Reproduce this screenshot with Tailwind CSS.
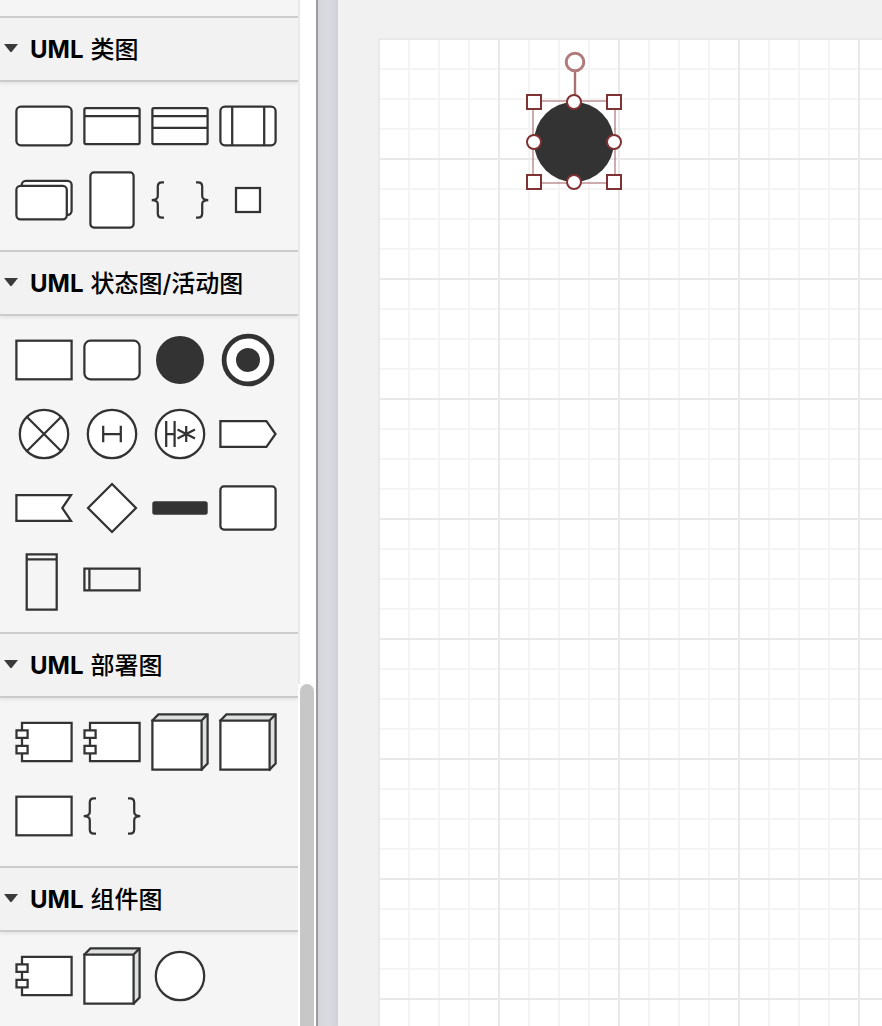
<!DOCTYPE html>
<html lang="zh">
<head>
<meta charset="utf-8">
<title>UML</title>
<script src="https://cdn.jsdelivr.net/npm/@tailwindcss/browser@4"></script>
</head>
<body class="h-[1026px] w-[882px] overflow-hidden font-['Inter','Noto_Sans_CJK_SC',sans-serif] text-black">
<svg class="hidden">
  <defs>
    <g id="tri"><path d="M4 0H18L12 7.6Q11 8.8 10 7.6Z" fill="#3a3a3a" stroke="none"/></g>
    <g id="rect"><rect x="-27.6" y="-19.3" width="55.2" height="38.6"/></g>
    <g id="round"><rect x="-27.6" y="-19.3" width="55.2" height="38.6" rx="4.5"/></g>
    <g id="braces" fill="none"><path d="M-16 -17.6H-18Q-22.2 -17.6 -22.2 -13.5V-4Q-22.2 0 -28.3 0Q-22.2 0 -22.2 4V13.5Q-22.2 17.6 -18 17.6H-16M16 -17.6H18Q22.2 -17.6 22.2 -13.5V-4Q22.2 0 28.3 0Q22.2 0 22.2 4V13.5Q22.2 17.6 18 17.6H16"/></g>
    <g id="comp"><path d="M-22 -19.2H27.6V19.2H-22Z"/><path d="M-27.5 -11.6H-16.4V-4.2H-27.5ZM-27.5 3.9H-16.4V11.3H-27.5Z"/></g>
    <g id="cube"><path d="M-27.6 -21.5L-21.6 -27.6H27.6V21.5L21.6 27.6Z" fill="#dfe0e0"/><path d="M-27.6 -21.5H21.6V27.6H-27.6ZM21.6 -21.5L27.6 -27.6"/></g>
    <g id="ring"><circle r="24.2"/></g>
  </defs>
</svg>
<div class="flex h-full">
  <aside class="h-full w-[298px] shrink-0 overflow-hidden bg-[#f5f5f5] pt-4">
    <section>
      <h2 class="flex h-[66px] items-center border-y-2 border-[#cbcbcb] bg-[#f2f2f2] text-2xl font-bold shadow-[0_2px_3px_#e4e4e4]"><svg class="mt-[-2px] h-[9px] w-[30px]" viewBox="0 0 30 9"><use href="#tri"/></svg><span class="flex pt-[2px]">UML<span class="ml-[7px] font-medium">类图</span></span></h2>
      <div class="grid auto-rows-[74px] grid-cols-[repeat(4,68px)] fill-white stroke-[#333] stroke-[2.25px] pt-[7px] pb-[13px] pl-[10px]">
        <svg viewBox="-34 -37 68 74"><use href="#round"/></svg>
        <svg viewBox="-34 -37 68 74"><rect x="-27.6" y="-18" width="55.2" height="36" rx="1.5"/><path d="M-27 -10H27"/></svg>
        <svg viewBox="-34 -37 68 74"><rect x="-27.6" y="-18" width="55.2" height="36" rx="1.5"/><path d="M-27 -10H27M-27 1.8H27"/></svg>
        <svg viewBox="-34 -37 68 74"><use href="#round"/><path d="M-15.8 -19V19M16.2 -19V19"/></svg>
        <svg viewBox="-34 -37 68 74"><rect x="-22.2" y="-19.2" width="49.8" height="34" rx="4"/><rect x="-27.6" y="-14.2" width="50.4" height="33.5" rx="4"/></svg>
        <svg viewBox="-34 -37 68 74"><rect x="-21.6" y="-27.6" width="43.2" height="55.2" rx="3.5"/></svg>
        <svg viewBox="-34 -37 68 74"><use href="#braces"/></svg>
        <svg viewBox="-34 -37 68 74"><rect x="-12" y="-12" width="24" height="24"/></svg>
      </div>
    </section>
    <section>
      <h2 class="flex h-[66px] items-center border-y-2 border-[#cbcbcb] bg-[#f2f2f2] text-2xl font-bold shadow-[0_2px_3px_#e4e4e4]"><svg class="mt-[-2px] h-[9px] w-[30px]" viewBox="0 0 30 9"><use href="#tri"/></svg><span class="flex pt-[2px]">UML<span class="ml-[7px] font-medium">状态图/活动图</span></span></h2>
      <div class="grid auto-rows-[74px] grid-cols-[repeat(4,68px)] fill-white stroke-[#333] stroke-[2.25px] pt-[7px] pb-[13px] pl-[10px]">
        <svg viewBox="-34 -37 68 74"><use href="#rect"/></svg>
        <svg viewBox="-34 -37 68 74"><rect x="-27.6" y="-19.3" width="55.2" height="38.6" rx="6"/></svg>
        <svg viewBox="-34 -37 68 74"><circle r="24" fill="#333" stroke="none"/></svg>
        <svg viewBox="-34 -37 68 74"><circle r="23.9" class="stroke-[4.8px]"/><circle r="12" fill="#333" stroke="none"/></svg>
        <svg viewBox="-34 -37 68 74"><use href="#ring"/><path d="M-17 -17L17 17M17 -17L-17 17"/></svg>
        <svg viewBox="-34 -37 68 74"><use href="#ring"/><path d="M-8.8 -8.3V8.3M8.8 -8.3V8.3M-9 0H9"/></svg>
        <svg viewBox="-34 -37 68 74"><use href="#ring"/><path d="M-13.8 -13V13M-5.4 -13V13M-14 0H-5.4M6.2 -8V8M-2.5 -4.5L15 4.5M15 -4.5L-2.5 4.5"/></svg>
        <svg viewBox="-34 -37 68 74"><path d="M-27.6 -12.8H18.4L27.5 0L18.4 12.8H-27.6Z"/></svg>
        <svg viewBox="-34 -37 68 74"><path d="M-27.6 -12.9H27L18.3 0L27 12.9H-27.6Z"/></svg>
        <svg viewBox="-34 -37 68 74"><path d="M0 -24L24 0L0 24L-24 0Z"/></svg>
        <svg viewBox="-34 -37 68 74"><rect x="-27.7" y="-6.8" width="55.4" height="13.6" rx="2.5" fill="#333" stroke="none"/></svg>
        <svg viewBox="-34 -37 68 74"><rect x="-27.6" y="-21.6" width="55.2" height="43.2" rx="3.5"/></svg>
        <svg viewBox="-34 -37 68 74"><path fill="none" d="M-17.3 -27.6H12.7V27.6H-17.3ZM-17.3 -22.6H12.7"/></svg>
        <svg viewBox="-34 -37 68 74"><path fill="none" d="M-27.6 -13.3H27.6V8.3H-27.6ZM-22.6 -13.3V8.3"/></svg>
      </div>
    </section>
    <section>
      <h2 class="flex h-[66px] items-center border-y-2 border-[#cbcbcb] bg-[#f2f2f2] text-2xl font-bold shadow-[0_2px_3px_#e4e4e4]"><svg class="mt-[-2px] h-[9px] w-[30px]" viewBox="0 0 30 9"><use href="#tri"/></svg><span class="flex pt-[2px]">UML<span class="ml-[7px] font-medium">部署图</span></span></h2>
      <div class="grid auto-rows-[74px] grid-cols-[repeat(4,68px)] fill-white stroke-[#333] stroke-[2.25px] pt-[7px] pb-[13px] pl-[10px]">
        <svg viewBox="-34 -37 68 74"><use href="#comp"/></svg>
        <svg viewBox="-34 -37 68 74"><use href="#comp"/></svg>
        <svg viewBox="-34 -37 68 74"><use href="#cube"/></svg>
        <svg viewBox="-34 -37 68 74"><use href="#cube"/></svg>
        <svg viewBox="-34 -37 68 74"><use href="#rect"/></svg>
        <svg viewBox="-34 -37 68 74"><use href="#braces"/></svg>
      </div>
    </section>
    <section>
      <h2 class="flex h-[66px] items-center border-y-2 border-[#cbcbcb] bg-[#f2f2f2] text-2xl font-bold shadow-[0_2px_3px_#e4e4e4]"><svg class="mt-[-2px] h-[9px] w-[30px]" viewBox="0 0 30 9"><use href="#tri"/></svg><span class="flex pt-[2px]">UML<span class="ml-[7px] font-medium">组件图</span></span></h2>
      <div class="grid auto-rows-[74px] grid-cols-[repeat(4,68px)] fill-white stroke-[#333] stroke-[2.25px] pt-[7px] pb-[13px] pl-[10px]">
        <svg viewBox="-34 -37 68 74"><use href="#comp"/></svg>
        <svg viewBox="-34 -37 68 74"><use href="#cube"/></svg>
        <svg viewBox="-34 -37 68 74"><use href="#ring"/></svg>
      </div>
    </section>
  </aside>
  <div class="flex w-[18px] shrink-0 flex-col bg-white">
    <div class="h-[684px] w-[2px] shrink-0 bg-[#e9e9e9]"></div>
    <div class="ml-[2px] w-[14px] grow rounded-t-[7px] bg-[#c7c7c7]"></div>
  </div>
  <div class="box-content w-[20px] shrink-0 border-l-2 border-[#9b9b9b] bg-linear-to-r from-[#d4d5d9] via-[#d9dbe0] to-[#d0d2d7]"></div>
  <main class="min-w-0 grow bg-[#f1f1f1] pt-[38px] pl-[40px]">
    <svg class="block h-[988px] w-[504px]" viewBox="378 38 504 988">
      <defs>
        <pattern id="minor" x="378" y="38" width="30" height="30" patternUnits="userSpaceOnUse"><path d="M0 1H30M1 0V30" stroke="#f4f4f4" stroke-width="2"/></pattern>
        <pattern id="major" x="378" y="38" width="120" height="120" patternUnits="userSpaceOnUse"><path d="M0 1H120M1 0V120" stroke="#e9e9e9" stroke-width="2"/></pattern>
      </defs>
      <rect x="378" y="38" width="504" height="988" fill="#fff"/>
      <rect x="378" y="38" width="504" height="988" fill="url(#minor)"/>
      <rect x="378" y="38" width="504" height="988" fill="url(#major)"/>
      <circle cx="574" cy="142" r="40" fill="#333"/>
      <rect x="533" y="101" width="82" height="82" fill="none" stroke="#7f3030" stroke-opacity=".4" stroke-width="2"/>
      <path d="M575 72V96" stroke="#aa7071" stroke-width="2.4"/>
      <circle cx="575" cy="62" r="8.8" fill="#fff" stroke="#b17b7c" stroke-width="3"/>
      <g fill="#fff" stroke="#7f3233" stroke-width="2">
        <path d="M527 95H541V109H527ZM607 95H621V109H607ZM527 175H541V189H527ZM607 175H621V189H607Z"/>
        <circle cx="574" cy="102" r="7"/><circle cx="534" cy="142" r="7"/><circle cx="614" cy="142" r="7"/><circle cx="574" cy="182" r="7"/>
      </g>
    </svg>
  </main>
</div>
</body>
</html>
